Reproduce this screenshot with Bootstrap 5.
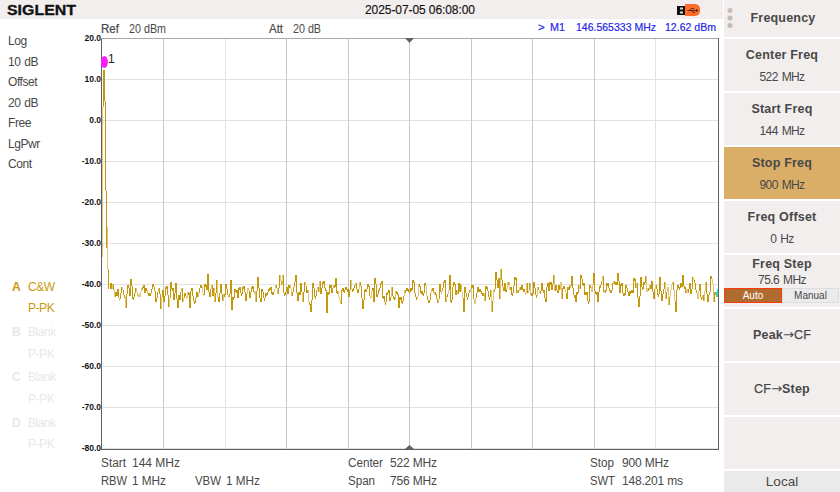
<!DOCTYPE html>
<html lang="en">
<head>
<meta charset="utf-8">
<meta name="viewport" content="width=device-width, initial-scale=1">
<title>Spectrum Analyzer</title>
<link href="https://cdn.jsdelivr.net/npm/bootstrap@5.3.0/dist/css/bootstrap.min.css" rel="stylesheet">
<style>
body{font-family:"Liberation Sans",Arial,sans-serif;font-size:12px;letter-spacing:-.45px;word-spacing:1px;line-height:14px;color:#484848;background:#fff;width:840px;height:492px;overflow:hidden}
svg{display:block;letter-spacing:0;word-spacing:0}
svg text{font-family:"Liberation Sans",Arial,sans-serif}
.screen{width:840px;height:492px}
.display{width:723px}
.topbar{height:19px;background:#f2eeee}
.left-info{width:78px;padding:15px 0 0 8px}
.left-info .setting{height:20.5px;line-height:14px}
.settings{height:230px}
.trace-row{height:21px;line-height:14px;margin-bottom:.4px}
.trace-group{height:45.2px;padding-left:4px;color:#e8e8e8}
.trace-group.on{color:#c8980f}
.trace-id{width:16px}
.scale{width:23px;height:420px;margin-top:14px;font-size:8.5px;letter-spacing:0;line-height:10px;font-weight:bold;color:#111}
.scale div{height:41px}
.graph{width:622px}
.menu{width:116px;gap:2px}
.menu-key{height:52px;background:#f2eeee;text-align:center}
.menu-head{height:37px}
.menu-key .title{font-weight:bold;font-size:12.5px;letter-spacing:.2px;word-spacing:0;line-height:15px}
.menu-key .val{font-size:12px;letter-spacing:-.6px;word-spacing:1.2px;line-height:14px}
.menu-key .thin{font-weight:normal;-webkit-text-stroke:.25px #484848}
.menu-key .arrow{font-family:"DejaVu Sans",sans-serif;font-size:13px;letter-spacing:0;font-weight:normal}
.value-key{padding-top:9px}
.value-key .title{margin-bottom:7px}
.step-key{padding-top:2px}
.menu-key.active{background:#dbae68}
.toggle{height:15px;font-size:10px;letter-spacing:0;line-height:13px;margin-top:2px}
.step-key .val{line-height:16px;height:14px}
.toggle .auto{width:58px;background:#b06c30;color:#fff;border:1px solid #ff3b0a}
.toggle .manual{width:57px;background:#ebebeb;border:1px solid #dedede}
.local{height:21px;background:#eaeaea;font-size:13.5px;line-height:21px;letter-spacing:0}
</style>
<script src="https://cdn.jsdelivr.net/npm/bootstrap@5.3.0/dist/js/bootstrap.bundle.min.js"></script>
</head>
<body>
<div class="screen d-flex">
  <main class="display d-flex flex-column">
    <header class="topbar">
      <svg width="723" height="19">
        <text x="7" y="15" font-size="14" font-weight="bold" fill="#111" stroke="#111" stroke-width=".3" textLength="69" lengthAdjust="spacingAndGlyphs">SIGLENT</text>
        <text x="365" y="14" font-size="12" fill="#111" stroke="#111" stroke-width=".15" textLength="110">2025-07-05 06:08:00</text>
        <rect x="677" y="6" width="8" height="9" fill="#111"/>
        <path d="M680 7.500h3v2h-3zM680 11.500h3v2h-3z" fill="#d8d4d4"/>
        <path d="M685 4h10a5 5 0 0 1 5 6a5 5 0 0 1-5 6h-10z" fill="#fd6c2b"/>
        <path d="M687.500 10.500h10M689.500 10.500l2-2h2.500M691.500 10.500l1.500 2h2" fill="none" stroke="#4b2412" stroke-width=".9"/>
        <path d="M696 9l2.500 1.500-2.500 1.500z" fill="#4b2412"/>
      </svg>
    </header>
    <div class="d-flex">
      <aside class="left-info">
        <div class="settings">
          <div class="setting">Log</div><div class="setting">10 dB</div><div class="setting">Offset</div><div class="setting">20 dB</div><div class="setting">Free</div><div class="setting">LgPwr</div><div class="setting">Cont</div>
        </div>
        <div class="pt-3">
          <div class="trace-group on d-flex"><b class="trace-id">A</b><div><div class="trace-row">C&amp;W</div><div class="trace-row">P-PK</div></div></div>
          <div class="trace-group d-flex"><b class="trace-id">B</b><div><div class="trace-row">Blank</div><div class="trace-row">P-PK</div></div></div>
          <div class="trace-group d-flex"><b class="trace-id">C</b><div><div class="trace-row">Blank</div><div class="trace-row">P-PK</div></div></div>
          <div class="trace-group d-flex"><b class="trace-id">D</b><div><div class="trace-row">Blank</div><div class="trace-row">P-PK</div></div></div>
        </div>
      </aside>
      <div class="scale text-end">
        <div>20.0</div><div>10.0</div><div>0.0</div><div>-10.0</div><div>-20.0</div><div>-30.0</div><div>-40.0</div><div>-50.0</div><div>-60.0</div><div>-70.0</div><div>-80.0</div>
      </div>
      <section class="graph">
        <svg width="622" height="19" font-size="12" fill="#484848">
          <text x="0" y="14" textLength="18" lengthAdjust="spacingAndGlyphs" stroke="#484848" stroke-width=".2">Ref</text><text x="28" y="14" textLength="37" lengthAdjust="spacingAndGlyphs">20 dBm</text>
          <text x="168" y="14" textLength="14" lengthAdjust="spacingAndGlyphs" stroke="#484848" stroke-width=".2">Att</text><text x="192" y="14" textLength="28" lengthAdjust="spacingAndGlyphs">20 dB</text>
          <g fill="#2626e6" stroke="#2626e6" stroke-width=".2" font-size="11.5"><text x="437" y="12">&gt;</text><text x="449" y="12" textLength="15" lengthAdjust="spacingAndGlyphs">M1</text><text x="475" y="12" textLength="80" lengthAdjust="spacingAndGlyphs">146.565333 MHz</text><text x="564" y="12" textLength="51" lengthAdjust="spacingAndGlyphs">12.62 dBm</text></g>
        </svg>
        <svg id="plot" width="622" height="413" viewBox="101 38 622 413">
          <g id="grid" shape-rendering="crispEdges"></g>
          <g id="trace" shape-rendering="crispEdges"></g>
          <path d="M405 38h9l-4.500 5zM405 449l4.500-4 4.500 4z" fill="#606060"/>
          <path d="M101.500 449.500V38.500" stroke="#606060" shape-rendering="crispEdges"/>
          <ellipse cx="104.300" cy="62" rx="3.600" ry="6" fill="#fb1efb"/>
          <text x="108" y="62.500" font-size="12" fill="#222">1</text>
          <path d="M717 289h1v8h-1zM715 293h2v1h-2z" fill="#00f2f2" shape-rendering="crispEdges"/>
        </svg>
        <svg width="622" height="42" font-size="12" fill="#484848">
          <text x="0" y="16" textLength="25" lengthAdjust="spacingAndGlyphs">Start</text><text x="31" y="16" textLength="48">144 MHz</text>
          <text x="247" y="16" textLength="35" lengthAdjust="spacingAndGlyphs">Center</text><text x="289" y="16" textLength="47">522 MHz</text>
          <text x="489" y="16" textLength="24" lengthAdjust="spacingAndGlyphs">Stop</text><text x="521" y="16" textLength="47">900 MHz</text>
          <text x="0" y="34" textLength="26" lengthAdjust="spacingAndGlyphs">RBW</text><text x="31" y="34" textLength="34" lengthAdjust="spacingAndGlyphs">1 MHz</text>
          <text x="94" y="34" textLength="26" lengthAdjust="spacingAndGlyphs">VBW</text><text x="125" y="34" textLength="34" lengthAdjust="spacingAndGlyphs">1 MHz</text>
          <text x="247" y="34" textLength="27" lengthAdjust="spacingAndGlyphs">Span</text><text x="289" y="34" textLength="47">756 MHz</text>
          <text x="489" y="34" textLength="25" lengthAdjust="spacingAndGlyphs">SWT</text><text x="521" y="34" textLength="61">148.201 ms</text>
        </svg>
      </section>
    </div>
  </main>
  <nav class="menu d-flex flex-column ms-auto">
    <div class="menu-key menu-head d-flex align-items-center">
      <svg width="14" height="37" fill="#c9bab5"><circle cx="6" cy="10.500" r="2.500"/><circle cx="6" cy="18" r="2.500"/><circle cx="6" cy="25.500" r="2.500"/></svg>
      <div class="title flex-fill pe-3 ps-1">Frequency</div>
    </div>
    <div class="menu-key value-key"><div class="title">Center Freq</div><div class="val">522 MHz</div></div>
    <div class="menu-key value-key"><div class="title">Start Freq</div><div class="val">144 MHz</div></div>
    <div class="menu-key value-key active"><div class="title">Stop Freq</div><div class="val">900 MHz</div></div>
    <div class="menu-key value-key"><div class="title">Freq Offset</div><div class="val">0 Hz</div></div>
    <div class="menu-key step-key"><div class="title">Freq Step</div><div class="val">75.6 MHz</div>
      <div class="toggle d-flex"><div class="auto">Auto</div><div class="manual">Manual</div></div></div>
    <div class="menu-key d-flex align-items-center justify-content-center"><div class="title">Peak<span class="arrow">→</span><span class="thin">CF</span></div></div>
    <div class="menu-key d-flex align-items-center justify-content-center"><div class="title"><span class="thin">CF</span><span class="arrow">→</span>Step</div></div>
    <div class="menu-key"></div>
    <div class="local text-center">Local</div>
  </nav>
</div>
<script>
const line=(x1,y1,x2,y2,c)=>`<path d="M${x1} ${y1}L${x2} ${y2}" stroke="${c}"/>`;
let g='';
for(let y=79;y<449;y+=41)g+=line(101,y+.5,718,y+.5,'#e2e2e2');
[163,225,286,348,409,471,532,594,655].forEach(x=>g+=line(x+.5,38,x+.5,449,x===225||x===655?'#e2e2e2':'#c8c8c8'));
g+=line(101,38.5,719,38.5,'#a8a8a8')+line(718.5,38,718.5,450,'#606060')+line(101,449.5,719,449.5,'#606060');
document.getElementById('grid').innerHTML=g;

// Sweep samples: third-pixel x offset from the segment start, third-pixel y offset from y = 260.
const segs=[[100,'27,87;33,88;37,72;42,112;50,108;55,115;60,100;65,80;75,82;77,143;83,75;89,108;92,57;97,118;103,100;112,108;120,95;126,80;134,100;140,90;150,100;158,72;165,125;172,95;181,146;187,90;190,125;197,80;206,140;212,66;219,120;226,68;232,143;240,95;246,125;252,100;262,95;268,143;274,85;283,128;290,95;302,75;310,105;316,75;323,42;328,110;335,75;343,125;350,60;356,125;362,72;368,124;375,72;381,106;391,60;394,150;404,88;412,115;420,98;428,80;436,122;442,85;448,113;455,82;465,125;473,52;481,125;487,95;496,100;504,88;512,80;520,95;525,75;531,103;538,45;544,75;548,45;553,103;560,80;570,88;580,82;586,45;592,122;600,70;607,125;612,66;620,100;626,125'],
[310,'1,155;7,70;12,112;20,90;28,63;32,102;36,65;43,85;50,158;58,75;66,85;76,55;84,110;92,133;98,85;108,88;116,112;120,60;128,90;137,68;143,100;148,65;157,146;163,90;172,72;180,115;187,85;190,125;193,55;200,110;207,85;214,62;217,115;226,125;232,95;238,122;244,82;253,120;258,95;266,145;275,130;283,90;290,85;298,95;307,60;312,100;320,112;328,78;337,105;345,78;354,125;362,100;370,100;378,118;382,130;387,72;395,92;403,60;407,125;414,90;418,45;421,127;430,65;436,105;445,68;453,92;460,155;464,80;472,112;480,88;488,75;493,133;500,100;510,92;520,98;524,122;530,80;537,110;540,90;545,157;551,90;556,37;561,85;565,55;568,118;571,27;576,82;584,70;590,88;596,65;602,82;608,100;614,50'],
[515,'1,55;5,98;15,90;25,88;33,68;38,98;43,70;50,100;56,65;60,105;66,80;74,98;80,70;86,90;92,127;96,68;103,66;108,90;115,45;121,75;130,75;136,66;139,118;148,88;155,118;163,75;168,48;174,105;181,125;188,100;196,45;203,75;210,95;220,125;224,75;230,95;235,40;241,100;248,125;254,78;262,47;268,90;276,70;285,90;293,70;298,65;303,75;307,38;313,100;320,70;328,105;335,85;340,108;350,90;355,55;363,68;370,142;376,50;382,88;391,47;396,85;404,75;410,62;415,118;422,75;427,105;433,52;440,122;448,65;451,118;456,80;460,135;466,90;473,65;481,157;487,75;495,70;501,45;507,80;517,100;524,70;530,88;533,50;540,90;546,118;552,72;557,110;564,122;572,65;578,125;586,48;591,72;596,127;602,95;607,100']];
const pts=[];
segs.forEach(([x0,s])=>s.split(';').forEach(p=>{const [a,b]=p.split(',').map(Number);pts.push([Math.floor(x0+a/3),260+b/3]);}));
let seed=11;const rnd=()=>(seed=(seed*16807)%2147483647)/2147483647;
const key={};pts.forEach(([x,y])=>{if(!(x in key)||Math.abs(y-290)>Math.abs(key[x]-290))key[x]=y;});
const xs=Object.keys(key).map(Number).sort((a,b)=>a-b),ys={};
// Between two samples the level relaxes towards the noise floor and jitters around it.
xs.forEach((x,i)=>{ys[x]=key[x];const n=xs[i+1];for(let k=x+1;k<n;k++){const m=key[x]+(key[n]-key[x])*(k-x)/(n-x);ys[k]=m*.6+291*.4+(rnd()-.5)*13;}});
let t='';
for(let x=xs[0]+1;x<=716;x++){
  let a=Math.round(Math.min(ys[x-1],ys[x])),b=Math.round(Math.max(ys[x-1],ys[x]));
  if(b-a<3)b=a+3;
  t+=line(x+.5,a,x+.5,b,rnd()<.2?'#e0c878':'#c4980c');
}
const o='#c4980c',l='#dfc777';
t+=line(102.5,107,102.5,257,l)+line(103.5,70,103.5,107,o)+line(104.5,70,104.5,101,o)+line(105.5,101,105.5,191,o)+line(106.5,191,106.5,248,o)+line(107.5,227,107.5,269,l)+line(108.5,269,108.5,289,o);
document.getElementById('trace').innerHTML=t;
</script>
</body>
</html>
